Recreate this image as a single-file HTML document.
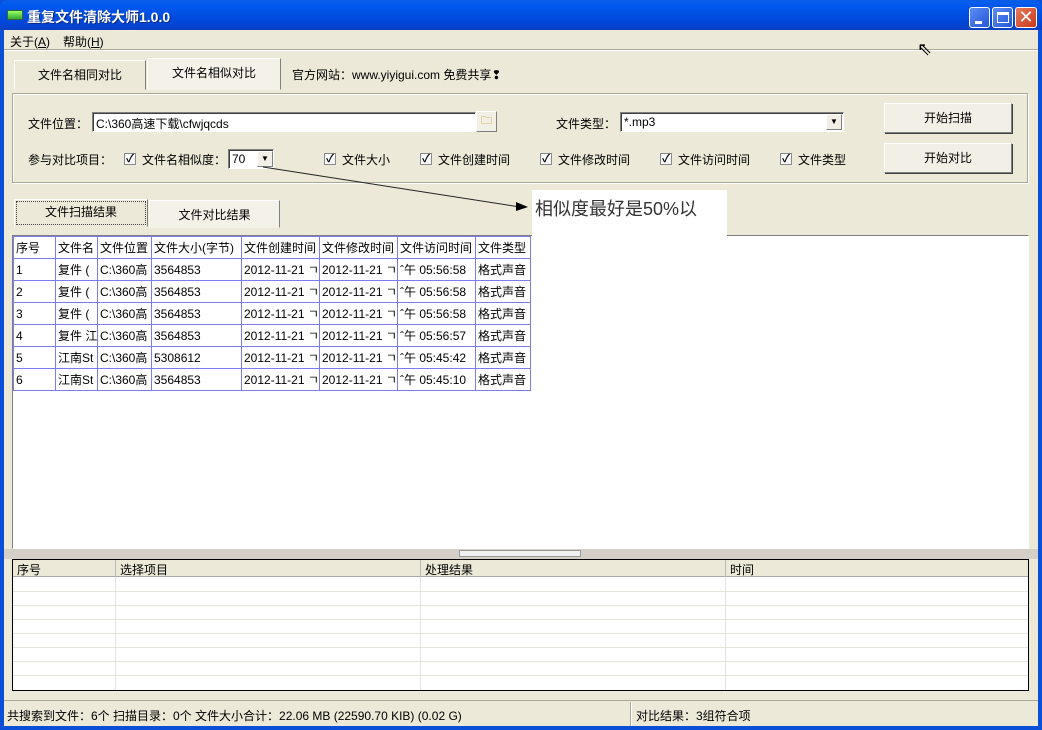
<!DOCTYPE html>
<html><head><meta charset="utf-8"><style>
*{margin:0;padding:0;box-sizing:border-box}
body{width:1042px;height:730px;overflow:hidden;background:#0A4FD8;font-family:"Liberation Sans","Noto Sans CJK SC","WenQuanYi Zen Hei",sans-serif;font-size:12px;color:#000;position:relative}
.a{position:absolute;white-space:nowrap}
#title{left:0;top:0;width:1042px;height:30px;background:linear-gradient(#0A5FE8,#0058EE 20%,#0045D6 80%,#0A3FC0);border-radius:7px 7px 0 0}
#client{left:4px;top:30px;width:1034px;height:696px;background:#ECE9D8}
.tb{width:21px;height:21px;top:7px;border:1px solid #fff;border-radius:3px;background:linear-gradient(135deg,#5C8DF5,#2456D6)}
.btn{background:#F2F0E6;border:1px solid;border-color:#fff #808080 #808080 #fff;box-shadow:1px 1px 0 #404040;text-align:center}
.sunk{background:#fff;border:1px solid;border-color:#808080 #fff #fff #808080;box-shadow:inset 1px 1px 0 #404040}
.cb{width:12px;height:12px;background:#fff;border:1px solid #888;font-size:11px;line-height:10px;text-align:center;font-weight:bold}
.tab{background:#F4F2E8;border:1px solid;border-color:#fff #808080 transparent #fff;text-align:center;font-size:12px}
table{border-collapse:collapse}
td{border:1px solid #7C7CF0;height:22px;padding:0 2px;font-size:12px;overflow:hidden;white-space:nowrap}
</style></head><body>
<div class="a" id="title"></div>
<div class="a" style="left:7px;top:10px;width:16px;height:10px;background:linear-gradient(#9f6,#3a3);border:1px solid #363"></div>
<div class="a" style="left:27px;top:7px;color:#fff;font-size:14px;font-weight:bold;text-shadow:1px 1px #0a2a80">重复文件清除大师1.0.0</div>
<div class="a tb" style="left:969px"><div class="a" style="left:5px;top:13px;width:7px;height:3px;background:#fff"></div></div>
<div class="a tb" style="left:992px"><div class="a" style="left:4px;top:4px;width:12px;height:11px;border:1px solid #fff;border-top-width:3px"></div></div>
<div class="a tb" style="left:1015px;width:22px;background:linear-gradient(135deg,#E97A5C,#C8381A);color:#fff;font-size:18px;line-height:18px;text-align:center">✕</div>
<div class="a" id="client"></div>
<div class="a" style="left:10px;top:33px">关于(<u>A</u>)</div>
<div class="a" style="left:63px;top:33px">帮助(<u>H</u>)</div>
<div class="a" style="left:4px;top:49px;width:1034px;height:2px;border-top:1px solid #ACA899;border-bottom:1px solid #fff"></div>
<div class="a" style="left:917px;top:40px;font-size:18px;line-height:18px">⇖</div>
<div class="a tab" style="left:14px;top:60px;width:132px;height:30px;line-height:28px;background:#ECE9D8">文件名相同对比</div>
<div class="a tab" style="left:147px;top:58px;width:134px;height:32px;line-height:28px">文件名相似对比</div>
<div class="a" style="left:292px;top:66px">官方网站：www.yiyigui.com 免费共享❢</div>
<div class="a" style="left:12px;top:93px;width:1016px;height:90px;border:1px solid #ACA899;box-shadow:inset 1px 1px #fff,1px 1px #fff"></div>
<div class="a" style="left:28px;top:115px">文件位置：</div>
<div class="a sunk" style="left:92px;top:112px;width:384px;height:20px;padding:2px 3px">C:\360高速下载\cfwjqcds</div>
<div class="a btn" style="left:476px;top:111px;width:21px;height:21px;box-shadow:none;font-size:11px;color:#a80">🗀</div>
<div class="a" style="left:556px;top:115px">文件类型：</div>
<div class="a sunk" style="left:620px;top:112px;width:224px;height:20px;padding:2px 3px">*.mp3</div>
<div class="a btn" style="left:826px;top:114px;width:16px;height:16px;box-shadow:none;font-size:8px;line-height:14px">▼</div>
<div class="a btn" style="left:884px;top:103px;width:128px;height:30px;line-height:28px">开始扫描</div>
<div class="a btn" style="left:884px;top:143px;width:128px;height:30px;line-height:28px">开始对比</div>
<div class="a" style="left:28px;top:151px">参与对比项目：</div>
<div class="a cb" style="left:124px;top:153px">✓</div><div class="a" style="left:142px;top:151px">文件名相似度：</div>
<div class="a sunk" style="left:228px;top:149px;width:46px;height:20px;padding:2px 3px">70</div>
<div class="a btn" style="left:257px;top:151px;width:16px;height:16px;box-shadow:none;font-size:8px;line-height:14px">▼</div>
<div class="a cb" style="left:324px;top:153px">✓</div><div class="a" style="left:342px;top:151px">文件大小</div>
<div class="a cb" style="left:420px;top:153px">✓</div><div class="a" style="left:438px;top:151px">文件创建时间</div>
<div class="a cb" style="left:540px;top:153px">✓</div><div class="a" style="left:558px;top:151px">文件修改时间</div>
<div class="a cb" style="left:660px;top:153px">✓</div><div class="a" style="left:678px;top:151px">文件访问时间</div>
<div class="a cb" style="left:780px;top:153px">✓</div><div class="a" style="left:798px;top:151px">文件类型</div>
<div class="a tab" style="left:14px;top:199px;width:134px;height:28px;line-height:24px;background:#ECE9D8;outline:1px dotted #444;outline-offset:-3px">文件扫描结果</div>
<div class="a tab" style="left:149px;top:200px;width:131px;height:28px;line-height:28px">文件对比结果</div>
<div class="a" style="left:12px;top:235px;width:1017px;height:314px;background:#fff;border:1px solid;border-color:#808080 #fff #fff #808080"></div>
<table class="a" style="left:13px;top:236px;table-layout:fixed;width:517px">
<colgroup><col style="width:42px"><col style="width:42px"><col style="width:54px"><col style="width:90px"><col style="width:78px"><col style="width:78px"><col style="width:78px"><col style="width:55px"></colgroup>
<tr><td>序号</td><td>文件名</td><td>文件位置</td><td>文件大小(字节)</td><td>文件创建时间</td><td>文件修改时间</td><td>文件访问时间</td><td>文件类型</td></tr>
<tr><td>1</td><td>复件 (</td><td>C:\360高</td><td>3564853</td><td>2012-11-21 ㄱ</td><td>2012-11-21 ㄱ</td><td>ˆ午 05:56:58</td><td>格式声音</td></tr>
<tr><td>2</td><td>复件 (</td><td>C:\360高</td><td>3564853</td><td>2012-11-21 ㄱ</td><td>2012-11-21 ㄱ</td><td>ˆ午 05:56:58</td><td>格式声音</td></tr>
<tr><td>3</td><td>复件 (</td><td>C:\360高</td><td>3564853</td><td>2012-11-21 ㄱ</td><td>2012-11-21 ㄱ</td><td>ˆ午 05:56:58</td><td>格式声音</td></tr>
<tr><td>4</td><td>复件 江</td><td>C:\360高</td><td>3564853</td><td>2012-11-21 ㄱ</td><td>2012-11-21 ㄱ</td><td>ˆ午 05:56:57</td><td>格式声音</td></tr>
<tr><td>5</td><td>江南St</td><td>C:\360高</td><td>5308612</td><td>2012-11-21 ㄱ</td><td>2012-11-21 ㄱ</td><td>ˆ午 05:45:42</td><td>格式声音</td></tr>
<tr><td>6</td><td>江南St</td><td>C:\360高</td><td>3564853</td><td>2012-11-21 ㄱ</td><td>2012-11-21 ㄱ</td><td>ˆ午 05:45:10</td><td>格式声音</td></tr>
</table>
<div class="a" style="left:532px;top:190px;width:195px;height:46px;background:#fff"></div>
<div class="a" style="left:535px;top:195px;font-size:18px;color:#333">相似度最好是50%以</div>
<svg class="a" style="left:0;top:0" width="1042" height="730"><line x1="263" y1="167" x2="520" y2="207" stroke="#222" stroke-width="1"/><polygon points="528,207 516,202 516,211" fill="#000"/></svg>
<div class="a" style="left:4px;top:549px;width:1034px;height:10px;background:#D4D0C8"></div>
<div class="a" style="left:459px;top:550px;width:122px;height:7px;background:#F0F0F0;border:1px solid #999"></div>
<div class="a" style="left:12px;top:559px;width:1017px;height:132px;background:#fff;border:1px solid #000"></div>
<div class="a" style="left:13px;top:560px;width:1015px;height:17px;background:#ECE9D8;border-bottom:1px solid #aaa"></div>
<div class="a" style="left:17px;top:561px">序号</div><div class="a" style="left:120px;top:561px">选择项目</div><div class="a" style="left:425px;top:561px">处理结果</div><div class="a" style="left:730px;top:561px">时间</div>
<svg class="a" style="left:13px;top:560px" width="1015" height="130">
<g stroke="#E4E4DC"><line x1="102.5" y1="0" x2="102.5" y2="130"/><line x1="407.5" y1="0" x2="407.5" y2="130"/><line x1="712.5" y1="0" x2="712.5" y2="130"/>
<line x1="0" y1="31.5" x2="1015" y2="31.5"/><line x1="0" y1="45.5" x2="1015" y2="45.5"/><line x1="0" y1="59.5" x2="1015" y2="59.5"/><line x1="0" y1="73.5" x2="1015" y2="73.5"/><line x1="0" y1="87.5" x2="1015" y2="87.5"/><line x1="0" y1="101.5" x2="1015" y2="101.5"/><line x1="0" y1="115.5" x2="1015" y2="115.5"/></g>
<g stroke="#bbb"><line x1="102.5" y1="0" x2="102.5" y2="17"/><line x1="407.5" y1="0" x2="407.5" y2="17"/><line x1="712.5" y1="0" x2="712.5" y2="17"/></g></svg>
<div class="a" style="left:4px;top:700px;width:1034px;height:26px;border-top:1px solid #ACA899"></div>
<div class="a" style="left:630px;top:702px;width:2px;height:24px;border-left:1px solid #ACA899;border-right:1px solid #fff"></div>
<div class="a" style="left:7px;top:707px">共搜索到文件：6个  扫描目录：0个  文件大小合计：22.06 MB (22590.70 KIB) (0.02 G)</div>
<div class="a" style="left:636px;top:707px">对比结果：3组符合项</div>
</body></html>
